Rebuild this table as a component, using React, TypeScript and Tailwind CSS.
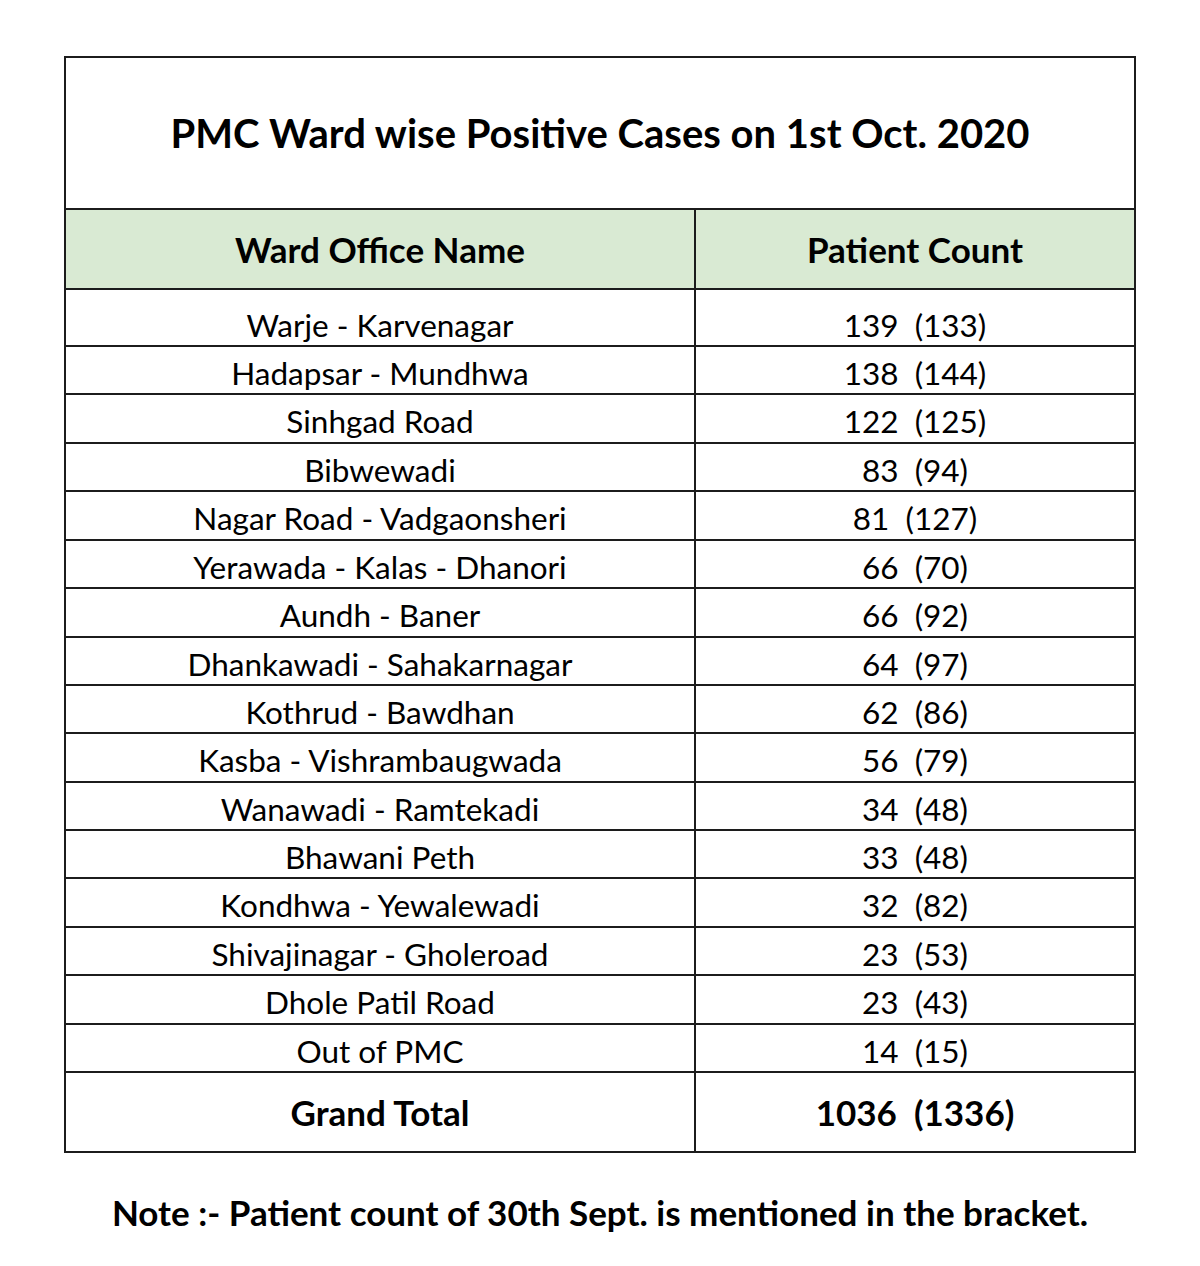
const rows: [string, string, string][] = [
  ["Warje - Karvenagar", "139", "133"],
  ["Hadapsar - Mundhwa", "138", "144"],
  ["Sinhgad Road", "122", "125"],
  ["Bibwewadi", "83", "94"],
  ["Nagar Road - Vadgaonsheri", "81", "127"],
  ["Yerawada - Kalas - Dhanori", "66", "70"],
  ["Aundh - Baner", "66", "92"],
  ["Dhankawadi - Sahakarnagar", "64", "97"],
  ["Kothrud - Bawdhan", "62", "86"],
  ["Kasba - Vishrambaugwada", "56", "79"],
  ["Wanawadi - Ramtekadi", "34", "48"],
  ["Bhawani Peth", "33", "48"],
  ["Kondhwa - Yewalewadi", "32", "82"],
  ["Shivajinagar - Gholeroad", "23", "53"],
  ["Dhole Patil Road", "23", "43"],
  ["Out of PMC", "14", "15"],
];

// row heights incl. bottom border, read off the picture
const heights = [
  "h-[57px]",
  "h-[48px]",
  "h-[49px]",
  "h-[48px]",
  "h-[49px]",
  "h-[48px]",
  "h-[49px]",
  "h-[48px]",
  "h-[48px]",
  "h-[49px]",
  "h-[48px]",
  "h-[48px]",
  "h-[49px]",
  "h-[48px]",
  "h-[49px]",
  "h-[48px]",
];

export default function App() {
  return (
    <div className="w-[1200px] h-[1266px] bg-white text-black font-['Lato','Liberation_Sans',sans-serif]">
      <div className="pt-[56px] pl-[64px]">
        <div className="w-[1072px] border-2 border-[#1c1c1c]">
          <div className="h-[152px] border-b-2 border-[#1c1c1c] flex items-center justify-center">
            <h1 className="text-[40px] font-bold leading-none">PMC Ward wise Positive Cases on 1st Oct. 2020</h1>
          </div>

          <div className="h-[80px] border-b-2 border-[#1c1c1c] bg-[#d9ead3] grid grid-cols-[630px_1fr]">
            <div className="border-r-2 border-[#1c1c1c] flex items-center justify-center text-[35px] font-bold">
              Ward Office Name
            </div>
            <div className="flex items-center justify-center text-[35px] font-bold">Patient Count</div>
          </div>

          {rows.map(([name, now, prev], i) => (
            <div key={name} className={`${heights[i]} border-b-2 border-[#1c1c1c] grid grid-cols-[630px_1fr] text-[31.5px] leading-none`}>
              <div className={`border-r-2 border-[#1c1c1c] flex items-center justify-center ${i === 0 ? "pt-[17px]" : "pt-[7px]"}`}>
                {name}
              </div>
              <div className={`flex items-center justify-center whitespace-pre ${i === 0 ? "pt-[17px]" : "pt-[7px]"}`}>
                {`${now}  (${prev})`}
              </div>
            </div>
          ))}

          <div className="h-[78px] grid grid-cols-[630px_1fr] text-[35px] font-bold">
            <div className="border-r-2 border-[#1c1c1c] flex items-center justify-center">Grand Total</div>
            <div className="flex items-center justify-center whitespace-pre">1036  (1336)</div>
          </div>
        </div>

        <p className="w-[1072px] mt-[42px] text-center text-[35px] font-bold leading-none">
          Note :- Patient count of 30th Sept. is mentioned in the bracket.
        </p>
      </div>
    </div>
  );
}
